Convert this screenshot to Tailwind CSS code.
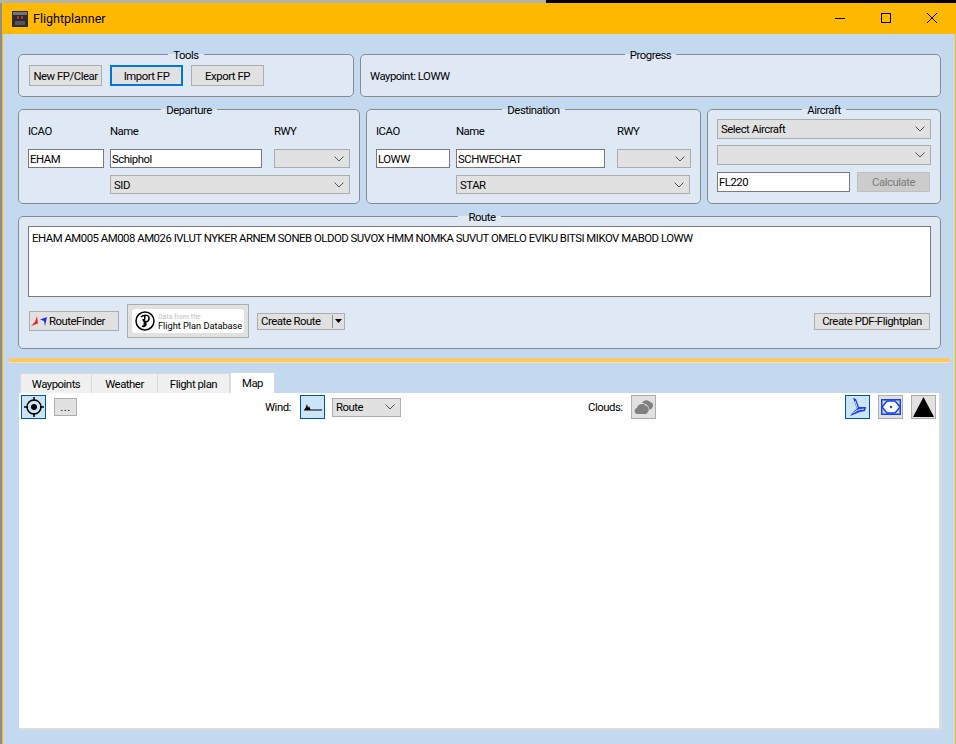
<!DOCTYPE html>
<html lang="en">
<head>
  <meta charset="UTF-8">
  <title>Flightplanner</title>
  <script src="https://cdn.jsdelivr.net/npm/@tailwindcss/browser@4"></script>
</head>
<body class="bg-[#8f8f88]">

<div class="w-[956px] h-[744px] overflow-hidden flex flex-col font-['Roboto',sans-serif] text-[11.35px] tracking-[-0.47px] leading-[14px] text-black">
  <!-- desktop strip above the window -->
  <div class="h-[3px] flex shrink-0">
    <div class="w-[546px] bg-[#b4b2aa]"></div>
    <div class="flex-1 bg-black"></div>
  </div>

  <div class="flex-1 min-h-0 ml-[2px] border-x border-[#ffb900] bg-[#c2d9f0] flex flex-col">
    <!-- title bar -->
    <div class="h-[31px] shrink-0 bg-[#ffb900] flex items-center pl-[9px]">
      <svg width="16" height="16" viewBox="0 0 16 16" class="mr-[5px]">
        <rect width="16" height="16" fill="#2b2b2e"/>
        <rect x="1" y="1" width="14" height="3" fill="#6d7480"/>
        <rect x="5" y="5" width="2" height="3" fill="#c0302a"/>
        <rect x="9" y="5" width="2" height="3" fill="#c0302a"/>
        <rect x="3" y="10" width="10" height="4" fill="#55555a"/>
      </svg>
      <span class="text-[12.5px] tracking-normal">Flightplanner</span>
      <div class="ml-auto flex items-center">
        <svg width="46" height="31" viewBox="0 0 46 31"><path d="M18 15.500h10" stroke="#000"/></svg>
        <svg width="46" height="31" viewBox="0 0 46 31"><rect x="18.500" y="10.500" width="9" height="9" fill="none" stroke="#000"/></svg>
        <svg width="46" height="31" viewBox="0 0 46 31"><path d="M18 10l10 10M28 10L18 20" stroke="#000"/></svg>
      </div>
    </div>

    <div class="pl-[15px] pr-[14px] pt-[13px] flex flex-col">
      <!-- tools + progress -->
      <div class="flex gap-[6px]">
        <fieldset class="w-[336px] h-[50px] border border-[#8a8a8a] rounded-[5px] bg-[#dee9f5] px-[10px]">
          <legend class="mx-auto px-[5px]"><span class="relative top-px">Tools</span></legend>
          <div class="flex gap-[8px] mt-[4px]">
            <button class="w-[73px] h-[21px] whitespace-nowrap bg-[#e1e1e1] border border-[#adadad]">New FP/Clear</button>
            <button class="w-[73px] h-[21px] whitespace-nowrap bg-[#e1e1e1] border-2 border-[#0078d7]">Import FP</button>
            <button class="w-[73px] h-[21px] whitespace-nowrap bg-[#e1e1e1] border border-[#adadad]">Export FP</button>
          </div>
        </fieldset>
        <fieldset class="flex-1 h-[50px] border border-[#8a8a8a] rounded-[5px] bg-[#dee9f5] px-[9px]">
          <legend class="mx-auto px-[5px]"><span class="relative top-px">Progress</span></legend>
          <div class="mt-[8px]">Waypoint: LOWW</div>
        </fieldset>
      </div>

      <!-- departure / destination / aircraft -->
      <div class="flex gap-[6px] mt-[5px]">
        <fieldset class="w-[342px] h-[102px] border border-[#8a8a8a] rounded-[5px] bg-[#dee9f5] px-[9px]">
          <legend class="mx-auto px-[5px]"><span class="relative top-px">Departure</span></legend>
          <div class="grid grid-cols-[76px_152px_76px] gap-x-[6px] mt-[8px]">
            <div>ICAO</div>
            <div>Name</div>
            <div class="ml-[6px]">RWY</div>
          </div>
          <div class="flex mt-[11px]">
            <input class="w-[76px] h-[19px] bg-white border border-[#7a7a7a] px-px" value="EHAM">
            <input class="w-[152px] h-[19px] ml-[6px] bg-white border border-[#7a7a7a] px-px" value="Schiphol">
            <div class="w-[76px] h-[19px] ml-[12px] bg-[#e1e1e1] border border-[#adadad] flex items-center justify-end pr-[5px]">
              <svg width="10" height="6" viewBox="0 0 10 6"><path d="M0.500 0.500L5 5L9.500 0.500" fill="none" stroke="#555"/></svg>
            </div>
          </div>
          <div class="w-[240px] h-[19px] ml-[82px] mt-[7px] bg-[#e1e1e1] border border-[#adadad] flex items-center justify-between px-[3px] pr-[5px]">
            <span>SID</span>
            <svg width="10" height="6" viewBox="0 0 10 6"><path d="M0.500 0.500L5 5L9.500 0.500" fill="none" stroke="#555"/></svg>
          </div>
        </fieldset>

        <fieldset class="w-[335px] h-[102px] border border-[#8a8a8a] rounded-[5px] bg-[#dee9f5] px-[9px]">
          <legend class="mx-auto px-[5px]"><span class="relative top-px">Destination</span></legend>
          <div class="grid grid-cols-[74px_149px_76px] gap-x-[6px] mt-[8px]">
            <div>ICAO</div>
            <div>Name</div>
            <div class="ml-[6px]">RWY</div>
          </div>
          <div class="flex mt-[11px]">
            <input class="w-[74px] h-[19px] bg-white border border-[#7a7a7a] px-px" value="LOWW">
            <input class="w-[149px] h-[19px] ml-[6px] bg-white border border-[#7a7a7a] px-px" value="SCHWECHAT">
            <div class="w-[74px] h-[19px] ml-[12px] bg-[#e1e1e1] border border-[#adadad] flex items-center justify-end pr-[5px]">
              <svg width="10" height="6" viewBox="0 0 10 6"><path d="M0.500 0.500L5 5L9.500 0.500" fill="none" stroke="#555"/></svg>
            </div>
          </div>
          <div class="w-[234px] h-[19px] ml-[80px] mt-[7px] bg-[#e1e1e1] border border-[#adadad] flex items-center justify-between px-[3px] pr-[5px]">
            <span>STAR</span>
            <svg width="10" height="6" viewBox="0 0 10 6"><path d="M0.500 0.500L5 5L9.500 0.500" fill="none" stroke="#555"/></svg>
          </div>
        </fieldset>

        <fieldset class="flex-1 h-[102px] border border-[#8a8a8a] rounded-[5px] bg-[#dee9f5] px-[9px]">
          <legend class="mx-auto px-[5px]"><span class="relative top-px">Aircraft</span></legend>
          <div class="w-[214px] h-[20px] mt-[3px] bg-[#e1e1e1] border border-[#adadad] flex items-center justify-between px-[3px] pr-[5px]">
            <span>Select Aircraft</span>
            <svg width="10" height="6" viewBox="0 0 10 6"><path d="M0.500 0.500L5 5L9.500 0.500" fill="none" stroke="#555"/></svg>
          </div>
          <div class="w-[214px] h-[20px] mt-[6px] bg-[#e1e1e1] border border-[#adadad] flex items-center justify-end pr-[5px]">
            <svg width="10" height="6" viewBox="0 0 10 6"><path d="M0.500 0.500L5 5L9.500 0.500" fill="none" stroke="#555"/></svg>
          </div>
          <div class="flex mt-[7px]">
            <input class="w-[133px] h-[20px] bg-white border border-[#7a7a7a] px-px" value="FL220">
            <button class="w-[73px] h-[20px] ml-[7px] bg-[#cccccc] border border-[#bfbfbf] text-[#7d7d7d]">Calculate</button>
          </div>
        </fieldset>
      </div>

      <!-- route -->
      <fieldset class="h-[140px] mt-[5px] border border-[#8a8a8a] rounded-[5px] bg-[#dee9f5] px-[9px]">
        <legend class="mx-auto pl-[10px] pr-[5px]"><span class="relative top-px">Route</span></legend>
        <div class="h-[71px] mt-[3px] bg-white border border-[#7a7a7a] px-[3px] py-[4px]">EHAM AM005 AM008 AM026 IVLUT NYKER ARNEM SONEB OLDOD SUVOX HMM NOMKA SUVUT OMELO EVIKU BITSI MIKOV MABOD LOWW</div>
        <div class="flex items-center h-[34px] mt-[7px]">
          <button class="w-[90px] h-[20px] ml-px bg-[#e1e1e1] border border-[#adadad] flex items-center pl-px">
            <svg width="17" height="11" viewBox="0 0 17 11" class="mr-[1px]">
              <path d="M0 10L7 7.500L6 0L4 6z" fill="#f02020"/>
              <path d="M16 1L9 3.500L13 5L14 10z" fill="#1a2fe0"/>
            </svg>
            <span>RouteFinder</span>
          </button>
          <div class="w-[122px] h-[34px] ml-[8px] bg-[#e1e1e1] border border-[#adadad] p-[4px]">
            <div class="h-full bg-white rounded-[3px] flex items-center pl-[3px]">
              <svg width="20" height="20" viewBox="0 0 20 20" class="shrink-0">
                <circle cx="10" cy="10" r="9" fill="none" stroke="#000" stroke-width="1.500"/>
                <path d="M6 6c3-3 9-2 8 2s-5 3-6 1M10 4L9 16M7 15c2 1 4 0 4-2s-3-3-3-5" fill="none" stroke="#000" stroke-width="1.500"/>
              </svg>
              <div class="ml-[3px] tracking-normal">
                <div class="text-[7px] leading-[8px] text-[#bdbdbd]">Data from the</div>
                <div class="text-[9.200px] leading-[9px] whitespace-nowrap">Flight Plan Database</div>
              </div>
            </div>
          </div>
          <div class="w-[88px] h-[17px] ml-[8px] bg-[#e1e1e1] border border-[#adadad] flex items-center pl-[3px]">
            <span>Create Route</span>
            <span class="ml-auto h-[13px] w-[12px] border-l border-[#8a8a8a] flex items-center justify-center">
              <svg width="7" height="4" viewBox="0 0 7 4"><path d="M0 0h7L3.500 4z" fill="#000"/></svg>
            </span>
          </div>
          <button class="w-[116px] h-[17px] ml-auto mr-px whitespace-nowrap bg-[#e1e1e1] border border-[#adadad]">Create PDF-Flightplan</button>
        </div>
      </fieldset>
    </div>

    <!-- splitter -->
    <div class="h-[5px] mt-[9px] ml-[6px] mr-[5px] bg-[#ffc766] border-b border-[#ffdf9f] shrink-0"></div>

    <!-- tabs -->
    <div class="ml-[16px] mr-[13px] mt-[9px] flex-1 min-h-0 flex flex-col">
      <div class="flex items-end h-[21px] pl-px shrink-0">
        <div class="w-[72px] h-[20px] bg-[#f0f0f0] border border-b-0 border-[#d9d9d9] flex items-center justify-center">Waypoints</div>
        <div class="w-[66px] h-[20px] bg-[#f0f0f0] border border-b-0 border-l-0 border-[#d9d9d9] flex items-center justify-center">Weather</div>
        <div class="w-[72px] h-[20px] bg-[#f0f0f0] border border-b-0 border-l-0 border-[#d9d9d9] flex items-center justify-center">Flight plan</div>
        <div class="w-[45px] h-[21px] bg-white border border-b-0 border-[#d9d9d9] flex items-center justify-center">Map</div>
      </div>
      <div class="h-[337px] bg-white border-r-[3px] border-b-2 border-[#dcdcdc]">
        <div class="flex items-center h-[24px] mt-[2px] pl-[2px]">
          <button class="w-[25px] h-[24px] bg-[#cce4f7] border border-[#005499] flex items-center justify-center">
            <svg width="20" height="20" viewBox="0 0 20 20">
              <circle cx="10" cy="10" r="7" fill="none" stroke="#000" stroke-width="1.500"/>
              <circle cx="10" cy="10" r="3" fill="#000"/>
              <path d="M10 0v4M10 16v4M0 10h4M16 10h4" stroke="#000" stroke-width="1.500"/>
            </svg>
          </button>
          <button class="w-[23px] h-[18px] ml-[8px] bg-[#e1e1e1] border border-[#adadad] leading-[14px] tracking-[0.5px]">...</button>
          <span class="ml-[188px] w-[35px]">Wind:</span>
          <button class="w-[25px] h-[24px] bg-[#cce4f7] border border-[#005499] flex items-center justify-center">
            <svg width="18" height="7" viewBox="0 0 18 7">
              <path d="M0 6L1.500 4L3 0L4 4L5 2L6.500 5.500H18V6.500H0z" fill="#000"/>
            </svg>
          </button>
          <div class="w-[69px] h-[19px] ml-[7px] bg-[#e1e1e1] border border-[#adadad] flex items-center justify-between px-[3px] pr-[5px]">
            <span>Route</span>
            <svg width="10" height="6" viewBox="0 0 10 6"><path d="M0.500 0.500L5 5L9.500 0.500" fill="none" stroke="#555"/></svg>
          </div>
          <span class="ml-[187px] w-[43px]">Clouds:</span>
          <button class="w-[25px] h-[24px] bg-[#e1e1e1] border border-[#adadad] flex items-center justify-center">
            <svg width="20" height="16" viewBox="0 0 20 16">
              <path d="M8 4C9 1 14 0 16 3C19 3 20 7 18 9C17.500 10 16.500 10.500 15.500 10.500C15 7 12 4.500 8 4z" fill="#808080"/>
              <path d="M3.500 15C0 15 -0.500 9.500 3 9C3.500 5 10 3.500 12 7C14.500 7 16 11 13.500 13.500C13 14.500 12 15 11 15z" fill="#808080"/>
            </svg>
          </button>
          <button class="w-[25px] h-[24px] ml-[189px] bg-[#cce4f7] border border-[#005499] flex items-center justify-center">
            <svg width="20" height="20" viewBox="0 0 20 20">
              <path d="M5 1L8 2L11 10L18 10L17 14L12 15L2 19L6 14L9 12z" fill="#1a3ff0"/>
              <path d="M7 4L9.500 11M5 16L10 13L16 12" fill="none" stroke="#cce4f7"/>
            </svg>
          </button>
          <button class="w-[25px] h-[24px] ml-[8px] bg-[#e1e1e1] border border-[#adadad] flex items-center justify-center">
            <svg width="20" height="16" viewBox="0 0 20 16">
              <rect x="0.750" y="0.750" width="18.500" height="14.500" fill="#cce4f7" stroke="#1a3ff0" stroke-width="1.500"/>
              <path d="M1 8L6 2H14L19 8L14 14H6z" fill="#fff" stroke="#1a3ff0" stroke-width="1.500"/>
              <circle cx="10" cy="8" r="1.200" fill="#1a3ff0"/>
            </svg>
          </button>
          <button class="w-[25px] h-[24px] ml-[8px] bg-[#e1e1e1] border border-[#adadad] flex items-center justify-center">
            <svg width="21" height="20" viewBox="0 0 21 20"><path d="M10.500 0L21 20H0z" fill="#000"/></svg>
          </button>
        </div>
      </div>
    </div>
  </div>
</div>

</body>
</html>
